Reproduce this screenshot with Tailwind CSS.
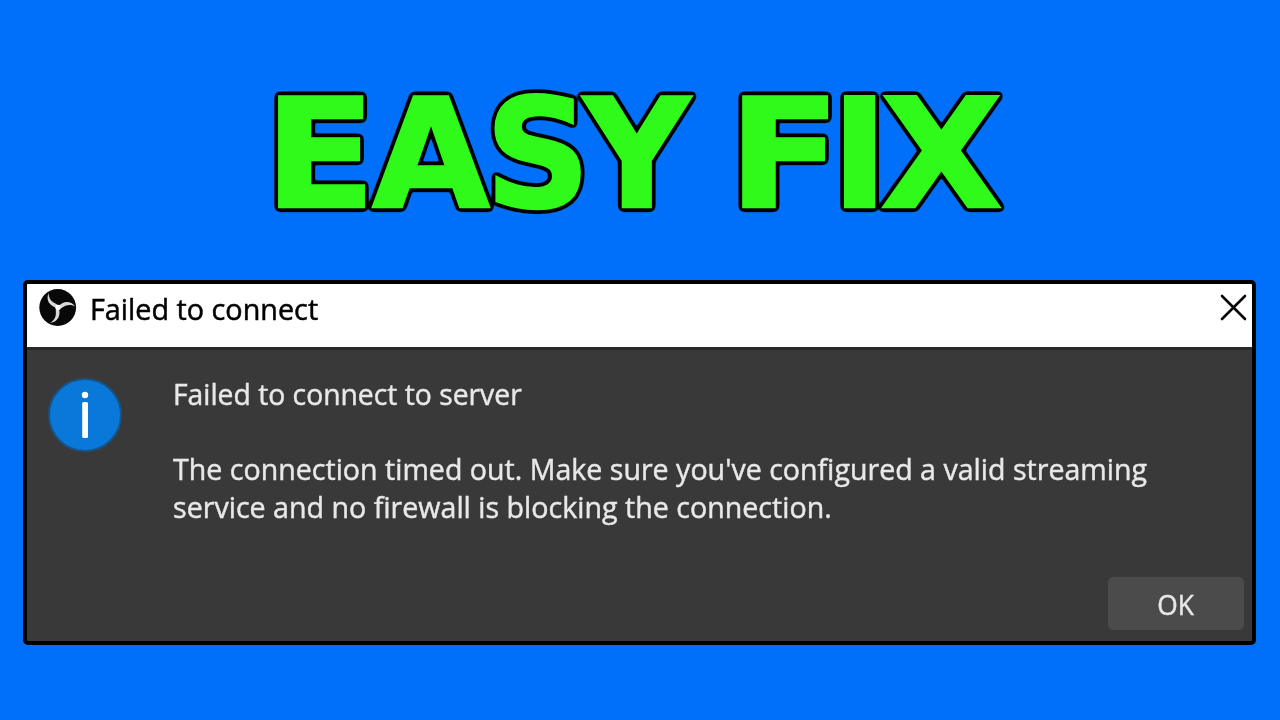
<!DOCTYPE html>
<html lang="en">
<head>
<meta charset="utf-8">
<title>Failed to connect</title>
<script src="https://cdn.jsdelivr.net/npm/@tailwindcss/browser@4"></script>
</head>
<body class="w-[1280px] h-[720px] overflow-hidden bg-[#0070fb] flex flex-col font-['Open_Sans','Noto_Sans',sans-serif]">
  <h1 class="w-full h-[280px] shrink-0">
    <svg class="block w-full h-full" viewBox="0 0 1280 280">
      <filter id="outline" x="-5%" y="-10%" width="110%" height="120%" color-interpolation-filters="sRGB">
        <feGaussianBlur in="SourceAlpha" stdDeviation="2"/>
        <feComponentTransfer result="edge"><feFuncA type="linear" slope="22" intercept="-0.35"/></feComponentTransfer>
        <feMerge><feMergeNode in="edge"/><feMergeNode in="SourceGraphic"/></feMerge>
      </filter>
      <text y="206.5" font-size="151" filter="url(#outline)" class="font-['DejaVu_Sans',sans-serif] font-bold fill-[#2ffa19] stroke-[#2ffa19] stroke-[2.5]"><tspan x="264.500" textLength="111" lengthAdjust="spacingAndGlyphs">E</tspan><tspan x="372.2" textLength="117.5" lengthAdjust="spacingAndGlyphs">A</tspan><tspan x="485.2" textLength="105" lengthAdjust="spacingAndGlyphs">S</tspan><tspan x="583.5" textLength="106.6" lengthAdjust="spacingAndGlyphs">Y</tspan> <tspan x="728.500" textLength="112" lengthAdjust="spacingAndGlyphs">F</tspan><tspan x="831.3" textLength="56.8" lengthAdjust="spacingAndGlyphs">I</tspan><tspan x="880.500" textLength="122" lengthAdjust="spacingAndGlyphs">X</tspan></text>
    </svg>
  </h1>
  <section class="w-[1233px] h-[365px] ml-[23px] shrink-0 border-4 border-black rounded-[5px] bg-[#393939] flex flex-col overflow-hidden">
    <header class="h-[63px] shrink-0 bg-white flex items-start pl-3 pr-[4px] text-black">
      <svg class="w-[38px] h-[38px] mt-[5px]" viewBox="0 0 38 38">
        <circle cx="18.700" cy="18.500" r="18.400" fill="#080808"/>
        <g fill="#d8d8d8">
          <path d="M18.500 19C11 17.500 6.500 11.500 9.500 4C9.800 9.500 12.500 12.500 15.500 14C18.500 15.500 19.500 16.500 19.500 18Z"/>
          <path d="M18.500 19C11 17.500 6.500 11.500 9.500 4C9.800 9.500 12.500 12.500 15.500 14C18.500 15.500 19.500 16.500 19.500 18Z" transform="rotate(120 19 18.500)"/>
          <path d="M18.500 19C11 17.500 6.500 11.500 9.500 4C9.800 9.500 12.500 12.500 15.500 14C18.500 15.500 19.500 16.500 19.500 18Z" transform="rotate(240 19 18.500)"/>
        </g>
        <circle cx="19" cy="18.500" r="2.700" fill="#fff"/>
      </svg>
      <span class="ml-[13px] mt-[5px] text-[29.5px] leading-[40px] whitespace-nowrap origin-left scale-x-[0.975] [-webkit-text-stroke:0.5px_#000]">Failed to connect</span>
      <svg class="ml-auto mt-[9px] w-[29px] h-[29px]" viewBox="0 0 29 29" fill="none" stroke="#080808" stroke-width="2.6" stroke-linecap="round"><path d="M3 3L26 26M26 3L3 26"/></svg>
    </header>
    <main class="flex-1 flex flex-col border-t-3 border-[#292929] text-[#e8e8e8]">
      <div class="flex flex-1 items-start">
        <svg class="w-[74px] h-[74px] ml-[21px] mt-[28px] shrink-0" viewBox="0 0 74 74">
          <circle cx="37" cy="37" r="36" fill="#0a78d8" stroke="#175387" stroke-width="2"/>
          <circle cx="37" cy="17" r="3.200" fill="#fff"/>
          <rect x="34.200" y="24" width="5.800" height="36" rx="1.500" fill="#fff"/>
        </svg>
        <div class="ml-[51px] mt-[25px] text-[29.5px] leading-[38px] whitespace-nowrap [-webkit-text-stroke:0.45px_#e8e8e8]">
          <p class="w-max origin-left scale-x-[0.959]">Failed to connect to server</p>
          <p class="w-max mt-[37px] origin-left scale-x-[0.969]">The connection timed out. Make sure you've configured a valid streaming</p>
          <p class="w-max origin-left scale-x-[0.970]">service and no firewall is blocking the connection.</p>
        </div>
      </div>
      <button class="self-end w-[136px] h-[53px] mr-[8px] mb-[11px] rounded-[5px] bg-[#4b4b4b] text-[28px] leading-none flex items-center justify-center [-webkit-text-stroke:0.45px_#e8e8e8]"><span class="mt-[1px] mr-[2px] scale-x-[0.94]">OK</span></button>
    </main>
  </section>
</body>
</html>
